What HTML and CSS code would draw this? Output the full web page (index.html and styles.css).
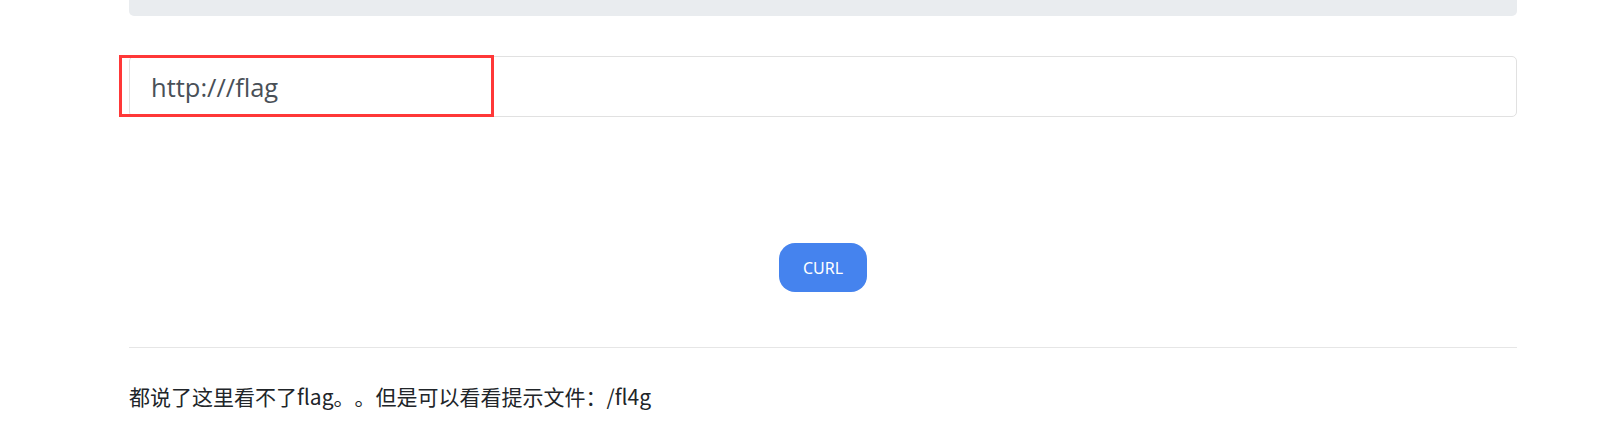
FILE: index.html
```html
<!DOCTYPE html>
<html lang="zh-CN">
<head>
<meta charset="utf-8">
<title>CURL</title>
<link rel="stylesheet" href="styles.css">
</head>
<body>
<div class="wrap">
  <div class="jumbo"></div>
  <div class="field">
    <span class="field-text">http:///flag</span>
    <div class="mark"></div>
  </div>
  <div class="actions">
    <button class="btn" type="button">CURL</button>
  </div>
  <div class="rule"></div>
  <p class="note">都说了这里看不了flag。。但是可以看看提示文件：/fl4g</p>
</div>
</body>
</html>
```

FILE: styles.css
```css
html, body {
  margin: 0;
  padding: 0;
  background: #ffffff;
}
body {
  font-family: "Noto Sans", "Noto Sans CJK SC", sans-serif;
  color: #212529;
}
.wrap {
  margin: 0 87px 0 129px;
}
.jumbo {
  height: 16px;
  background: #e9ecef;
  border-radius: 0 0 5px 5px;
}
.field {
  position: relative;
  box-sizing: border-box;
  margin-top: 40px;
  height: 61px;
  border: 1px solid #e1e1e1;
  border-radius: 5px;
  display: flex;
  align-items: center;
  padding-left: 21px;
}
.field-text {
  font-family: "Open Sans", "Noto Sans", sans-serif;
  font-size: 25.5px;
  color: #495057;
  line-height: 1;
  padding-top: 3px;
}
.mark {
  position: absolute;
  left: -11px;
  top: -2px;
  width: 375px;
  height: 62px;
  box-sizing: border-box;
  border: 3px solid #ff3838;
}
.actions {
  display: flex;
  justify-content: center;
  padding-top: 126px;
}
.btn {
  width: 88px;
  height: 49px;
  border: none;
  border-radius: 16px;
  background: #4583ee;
  color: #ffffff;
  font-family: "Noto Sans", sans-serif;
  font-size: 16px;
  padding: 0;
}
.rule {
  margin-top: 55px;
  border-top: 1px solid #e6e6e6;
}
.note {
  margin: 33px 0 0;
  font-family: "Noto Sans CJK SC", "Noto Sans", sans-serif;
  font-size: 21px;
  line-height: 30px;
  color: #212529;
  text-spacing-trim: space-all;
  font-feature-settings: "halt" 0, "palt" 0;
}
```
